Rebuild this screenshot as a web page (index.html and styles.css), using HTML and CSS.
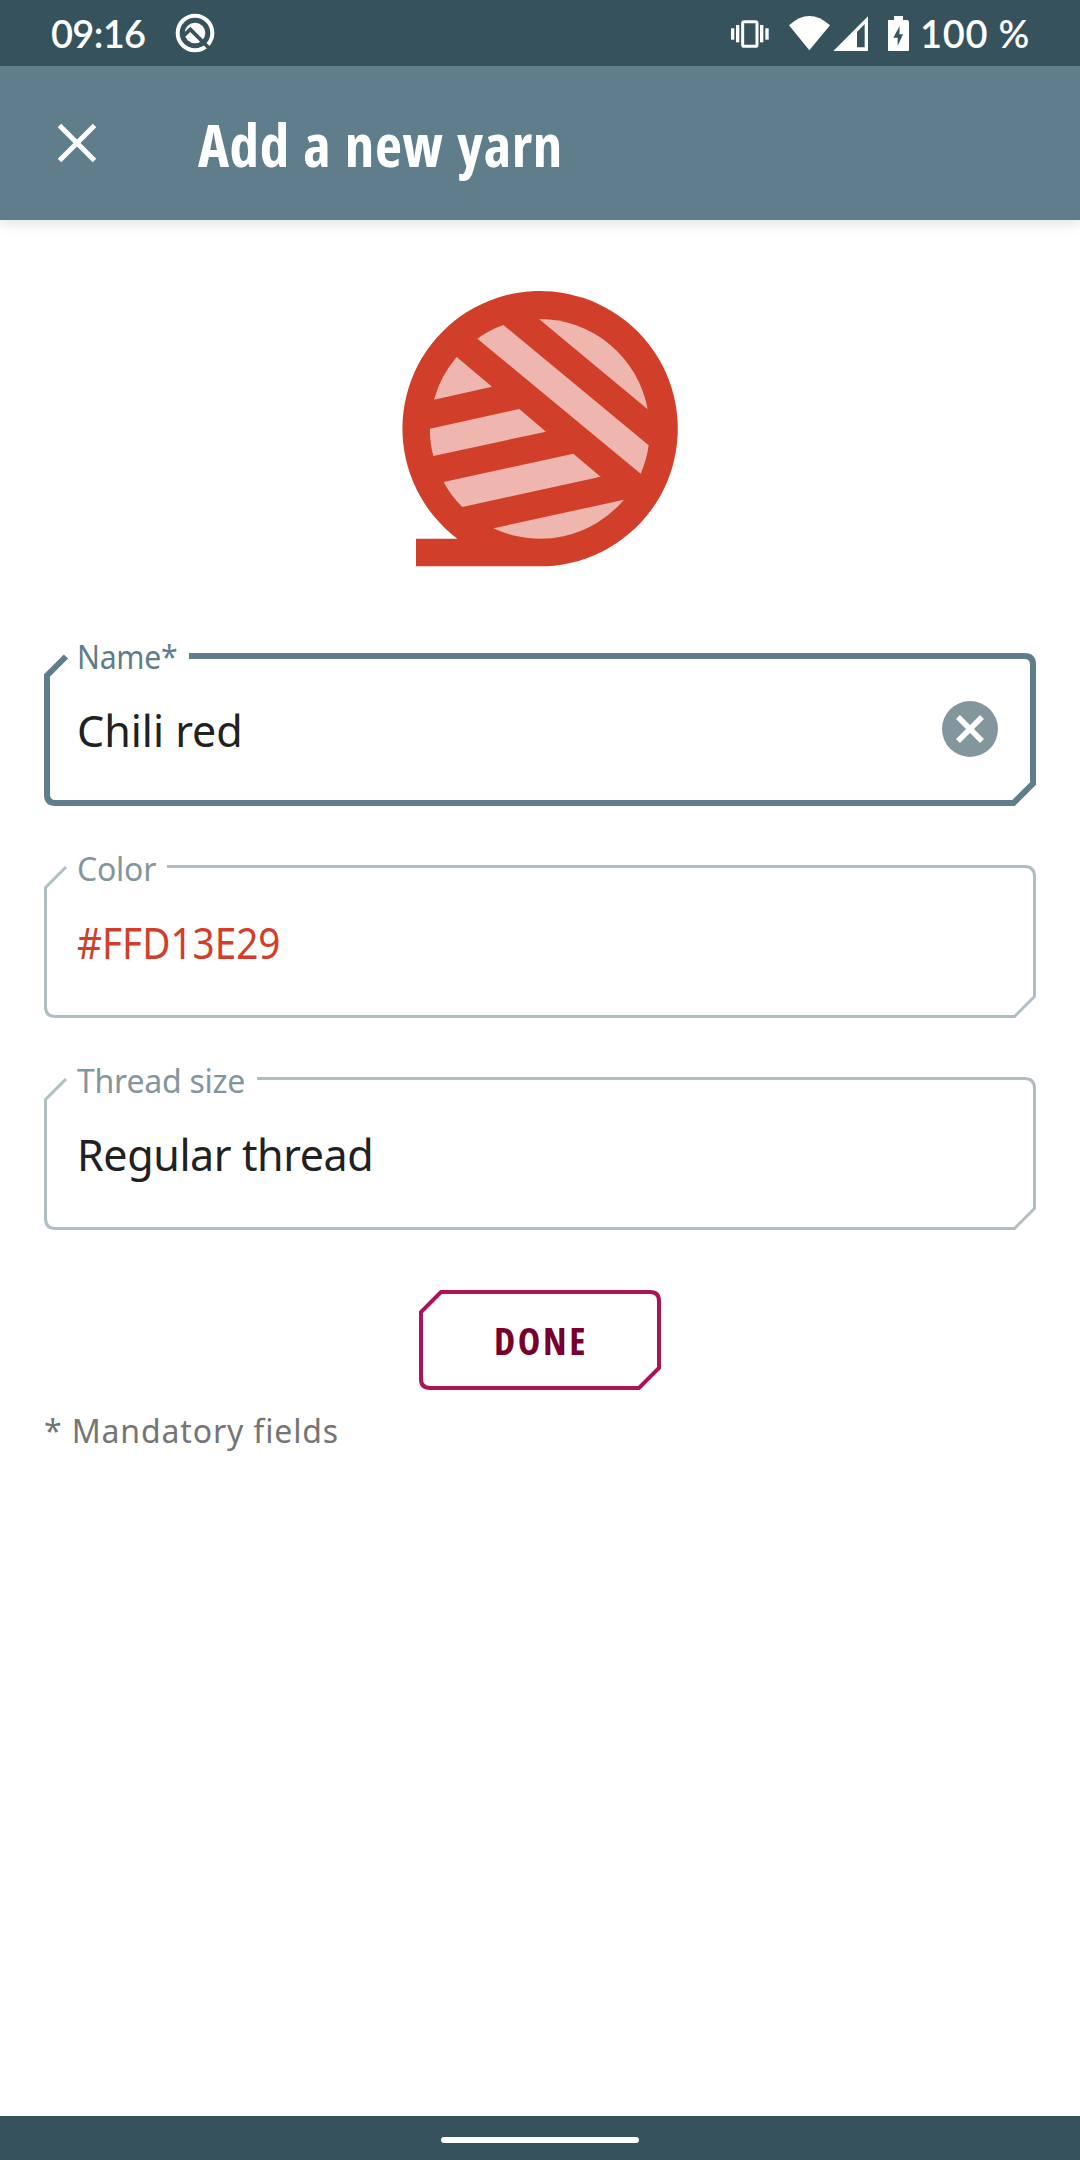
FILE: index.html
```html
<!DOCTYPE html>
<html lang="en">
<head>
<meta charset="utf-8">
<title>Add a new yarn</title>
<link rel="stylesheet" href="styles.css">
</head>
<body>
<div class="screen">
  <div class="statusbar">
    <span class="clock">09:16</span>
    <svg class="notif" width="40" height="40" viewBox="0 0 120 120">
      <circle cx="60" cy="60" r="52" fill="none" stroke="#fff" stroke-width="12"/>
      <circle cx="60" cy="60" r="31" fill="#fff"/>
      <path d="M26 68L46 49L102 105" fill="none" stroke="#35525d" stroke-width="11"/>
    </svg>
    <svg class="sys" width="190" height="40" viewBox="0 0 570 120">
      <g fill="#fff"><rect x="3" y="52" width="10" height="34"/><rect x="18" y="42" width="10" height="52"/><rect x="90" y="42" width="10" height="52"/><rect x="106" y="52" width="10" height="34"/>
      <path d="M177 43Q238-13 300 43L238 118Z"/>
      <path fill-rule="evenodd" d="M310 120L414 16V120ZM381 109H404V39L381 63Z"/>
      <path fill-rule="evenodd" d="M474 27H492V15H519V27H531Q537 27 537 33V116Q537 122 531 122H480Q474 122 474 116ZM509 45L490 80H503V105L519 70H508Z"/></g>
      <rect x="38" y="32" width="43" height="74" rx="5" fill="none" stroke="#fff" stroke-width="9"/>
    </svg>
    <span class="battery">100 %</span>
  </div>
  <div class="appbar">
    <svg width="40" height="40" viewBox="0 0 40 40"><path d="M2.500 2.500L37.500 37.500M37.500 2.500L2.500 37.500" stroke="#fff" stroke-width="5"/></svg>
    <h1>Add a new yarn</h1>
  </div>
  <div class="content">
    <svg class="yarn" width="320" height="320" viewBox="0 0 960 960">
      <path fill="#d13e29" d="M480 889H108V806H232A413 413 0 1 1 480 889Z"/>
      <g fill="#efb5af">
        <path d="M477 147A330 330 0 0 1 803 418Z"/>
        <path d="M292 206Q328 180 370 165L806 526Q800 570 782 611Z"/>
        <path d="M230 261L336 350L162 389Q180 320 230 261Z"/>
        <path d="M150 476L418 417L498 485L160 558Q149 520 150 476Z"/>
        <path d="M191 636L580 551L662 620L247 711Q213 678 191 636Z"/>
        <path d="M340 775L732 689A330 330 0 0 1 340 775Z"/>
      </g>
    </svg>
    <div class="field focused">
      <svg class="frame" width="992" height="153" viewBox="0 0 992 153"><path d="M22 3.500L3 22.500V141.500Q3 150 11.500 150H969.500L989 130.500V11.500Q989 3 980.500 3H145" fill="none" stroke="#607d8b" stroke-width="6"/></svg>
      <label class="name">Name*</label>
      <div class="value"><span>Chili red</span>
        <svg width="56" height="56" viewBox="0 0 56 56"><circle cx="28" cy="28" r="28" fill="#84969d"/><path d="M16 16L40 40M40 16L16 40" stroke="#fff" stroke-width="5.500"/></svg>
      </div>
    </div>
    <div class="field">
      <svg class="frame" width="992" height="153" viewBox="0 0 992 153"><path d="M22 2L1.500 22.500V141.500Q1.500 151.500 11.500 151.500H970.500L990.500 131.500V11.500Q990.500 1.500 980.500 1.500H123" fill="none" stroke="#b0bdc2" stroke-width="3"/></svg>
      <label>Color</label>
      <div class="value red">#FFD13E29</div>
    </div>
    <div class="field">
      <svg class="frame" width="992" height="153" viewBox="0 0 992 153"><path d="M22 2L1.500 22.500V141.500Q1.500 151.500 11.500 151.500H970.500L990.500 131.500V11.500Q990.500 1.500 980.500 1.500H213" fill="none" stroke="#b0bdc2" stroke-width="3"/></svg>
      <label>Thread size</label>
      <div class="value thread">Regular thread</div>
    </div>
    <button class="done"><svg class="frame" width="242" height="100" viewBox="0 0 242 100"><path d="M22 2H231Q240 2 240 11V78L220 98H11Q2 98 2 89V22Z" fill="none" stroke="#ad1457" stroke-width="4"/></svg><span>DONE</span></button>
    <p class="note">* Mandatory fields</p>
  </div>
  <div class="navbar"><div class="pill"></div></div>
</div>
</body>
</html>
```
FILE: styles.css
```css
* { box-sizing: border-box; }
body { margin: 0; background: #fff; font-family: "Noto Sans", sans-serif; color: #212121; }
.screen { width: 1080px; height: 2160px; display: flex; flex-direction: column; }
svg { display: block; flex: none; }
.statusbar { position: relative; z-index: 1; height: 66px; background: #35525d; color: #fff; display: flex; align-items: center; padding: 0 50px 1px; font-family: Lato, sans-serif; font-size: 38px; font-weight: 600; line-height: 64px; }
.clock { width: 125px; padding-left: 1px; letter-spacing: -.7px; }
.notif { margin-top: 1px; }
.sys { margin-left: 515px; margin-top: -4px; }
.battery { letter-spacing: .7px; }
.appbar { height: 154px; background: #607d8b; color: #fff; display: flex; align-items: center; padding-left: 57px; gap: 101px; box-shadow: 0 1px 14px rgba(0,0,0,.17); }
h1 { margin: 2px 0 0; font: 700 59px/80px "Open Sans", sans-serif; font-stretch: 75%; letter-spacing: .55px; word-spacing: 2.500px; }
.content { flex: 1; padding: 50px 44px 0; display: flex; flex-direction: column; }
.yarn { align-self: center; margin-bottom: 63px; }
.field { position: relative; height: 153px; margin-bottom: 59px; padding-left: 33px; }
.frame { position: absolute; left: 0; top: 0; }
label { display: block; height: 30px; margin-top: -18px; font-size: 32px; line-height: 44px; letter-spacing: -.25px; color: #84969d; }
.focused label { color: #607d8b; }
.name { transform: scaleX(.942); transform-origin: left; }
.value { height: 92px; display: flex; align-items: center; justify-content: space-between; padding-right: 38px; font-size: 43px; line-height: 60px; margin-top: 18px; }
.value span { padding-top: 3px; }
.red, .thread { padding-top: 3px; }
.red { color: #d13e29; transform: scaleX(.9); transform-origin: left; }
.thread { letter-spacing: -.4px; }
.done { position: relative; width: 242px; height: 100px; margin-top: 1px; border: 0; padding: 0 0 0 2px; background: none; color: #78002e; align-self: center; font: 700 38px/50px "Open Sans", sans-serif; font-stretch: 75%; letter-spacing: 2.600px; }
.note { margin: 16px 0 0; font-size: 32px; line-height: 50px; letter-spacing: .85px; color: #757575; }
.navbar { height: 44px; background: #35525d; display: flex; align-items: center; justify-content: center; padding-top: 4px; }
.pill { width: 198px; height: 6px; border-radius: 3px; background: #fff; }
```
